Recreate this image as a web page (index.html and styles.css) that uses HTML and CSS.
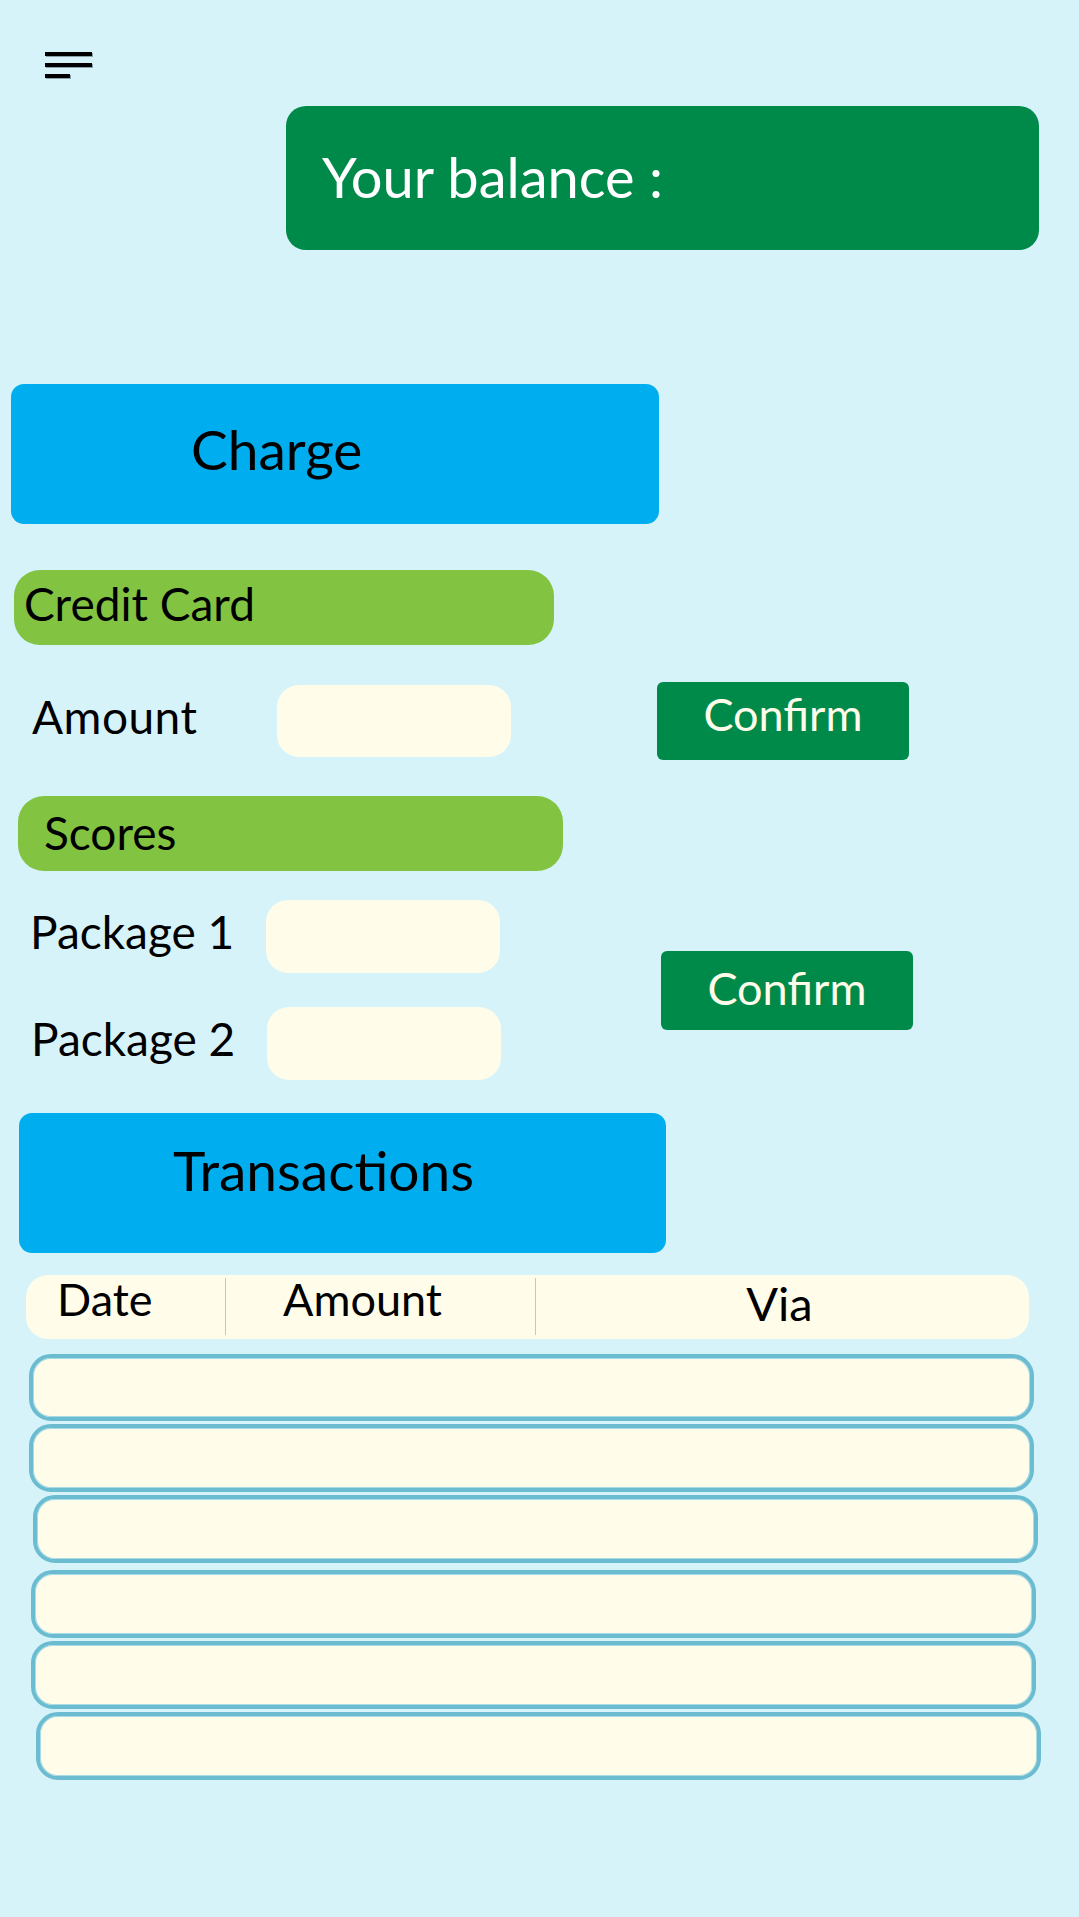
FILE: index.html
```html
<!DOCTYPE html>
<html lang="en">
<head>
<meta charset="utf-8">
<title>Wallet</title>
<link rel="stylesheet" href="styles.css">
</head>
<body>
<div class="page">
  <div class="menu" aria-label="Menu">
    <span class="menu-line"></span>
    <span class="menu-line"></span>
    <span class="menu-line menu-line--short"></span>
  </div>

  <div class="balance">Your balance :</div>

  <div class="section-btn section-btn--charge">Charge</div>

  <div class="tag tag--card">Credit Card</div>
  <div class="amount-row">
    <span class="field-label field-label--amount">Amount</span>
    <span class="input input--amount"></span>
    <button class="confirm confirm--card">Confirm</button>
  </div>

  <div class="tag tag--scores">Scores</div>
  <div class="scores-body">
    <div class="pkg-list">
      <div class="pkg-row">
        <span class="field-label field-label--pkg">Package 1</span>
        <span class="input"></span>
      </div>
      <div class="pkg-row pkg-row--2">
        <span class="field-label field-label--pkg">Package 2</span>
        <span class="input"></span>
      </div>
    </div>
    <button class="confirm confirm--scores">Confirm</button>
  </div>

  <div class="section-btn section-btn--tx">Transactions</div>

  <div class="table-head">
    <div class="th th--date">Date</div>
    <div class="th th--amount">Amount</div>
    <div class="th th--via">Via</div>
  </div>

  <div class="rows">
    <div class="row row--1"></div>
    <div class="row row--2"></div>
    <div class="row row--3"></div>
    <div class="row row--4"></div>
    <div class="row row--5"></div>
    <div class="row row--6"></div>
  </div>
</div>
</body>
</html>
```

FILE: styles.css
```css
* { box-sizing: border-box; }

html, body {
  margin: 0;
  padding: 0;
  background: #d7f3fa;
}

body {
  font-family: Lato, "Open Sans", "Liberation Sans", sans-serif;
  color: #000;
  min-height: 1917px;
}

.page {
  width: 1079px;
  padding-top: 52px;
}

/* hamburger */
.menu {
  margin-left: 45px;
  width: 47px;
  display: flex;
  flex-direction: column;
  gap: 7px;
}
.menu-line {
  display: block;
  height: 4px;
  width: 47px;
  background: #000;
  box-shadow: 1px 1px 0 rgba(60, 80, 90, 0.5);
}
.menu-line--short { width: 25px; }

/* balance */
.balance {
  margin-top: 28px;
  margin-left: 286px;
  width: 753px;
  height: 144px;
  background: #008a4a;
  border-radius: 20px;
  color: #fff;
  font-size: 56px;
  display: flex;
  align-items: center;
  padding-left: 36px;
  padding-bottom: 4px;
}

/* big blue section buttons */
.section-btn {
  height: 140px;
  background: #00aeef;
  border-radius: 13px;
  font-size: 55px;
  display: flex;
  align-items: center;
}
.section-btn--charge {
  margin-top: 134px;
  margin-left: 11px;
  width: 648px;
  padding-left: 180px;
  padding-bottom: 10px;
}
.section-btn--tx {
  margin-top: 33px;
  margin-left: 19px;
  width: 647px;
  padding-left: 154px;
  padding-bottom: 26px;
}

/* green tags */
.tag {
  height: 75px;
  background: #82c341;
  border-radius: 26px;
  font-size: 46px;
  display: flex;
  align-items: center;
  padding-bottom: 8px;
}
.tag--card {
  margin-top: 46px;
  margin-left: 14px;
  width: 540px;
  padding-left: 10px;
}
.tag--scores {
  margin-top: 36px;
  margin-left: 18px;
  width: 545px;
  padding-left: 26px;
  padding-bottom: 3px;
}

.field-label {
  font-size: 46px;
  padding-bottom: 10px;
}

.input {
  display: block;
  width: 234px;
  height: 73px;
  background: #fffdea;
  border-radius: 22px;
}

.confirm {
  width: 252px;
  height: 79px;
  background: #008a4a;
  border: none;
  border-radius: 6px;
  color: #fffdea;
  font-family: Lato, "Open Sans", "Liberation Sans", sans-serif;
  font-size: 45px;
  padding: 0 0 4px 0;
  display: flex;
  align-items: center;
  justify-content: center;
}

/* amount row */
.amount-row {
  margin-top: 37px;
  height: 78px;
  display: flex;
  align-items: center;
  padding-left: 32px;
}
.field-label--amount { width: 245px; letter-spacing: 0.5px; }
.input--amount { height: 72px; }
.confirm--card {
  margin-left: 146px;
  height: 78px;
  padding-bottom: 14px;
}

/* scores */
.scores-body {
  margin-top: 29px;
  display: flex;
  align-items: center;
}
.pkg-list {
  display: flex;
  flex-direction: column;
  gap: 34px;
  padding-left: 30px;
}
.pkg-row {
  display: flex;
  align-items: center;
}
.field-label--pkg { width: 236px; }
.pkg-row--2 { padding-left: 1px; }
.confirm--scores { margin-left: 160px; }

/* table header */
.table-head {
  margin-top: 22px;
  margin-left: 26px;
  width: 1003px;
  height: 64px;
  background: #fffdea;
  border-radius: 22px;
  display: flex;
  align-items: stretch;
  font-size: 45px;
}
.th {
  display: flex;
  align-items: center;
  padding-bottom: 16px;
}
.th--date {
  width: 200px;
  padding-left: 31px;
  border-right: 1.5px solid #c9c7b3;
  margin: 3px 0 4px;
}
.th--amount {
  width: 310px;
  padding-left: 57px;
  border-right: 1.5px solid #c9c7b3;
  margin: 3px 0 4px;
}
.th--via {
  flex: 1;
  justify-content: center;
  padding-right: 6px;
  padding-bottom: 8px;
  font-size: 47px;
}

/* transaction rows */
.rows {
  margin-top: 15px;
  display: flex;
  flex-direction: column;
  gap: 3px;
}
.row {
  height: 68px;
  width: 1005px;
  background: #fffdea;
  border: 4px solid #6bbcd1;
  border-radius: 22px;
  box-shadow: inset 0 0 0 1px #a9dbe6;
}
.row--1 { margin-left: 29px; height: 67px; }
.row--2 { margin-left: 29px; }
.row--3 { margin-left: 33px; }
.row--4 { margin-left: 31px; margin-top: 4px; }
.row--5 { margin-left: 31px; }
.row--6 { margin-left: 36px; }
```
